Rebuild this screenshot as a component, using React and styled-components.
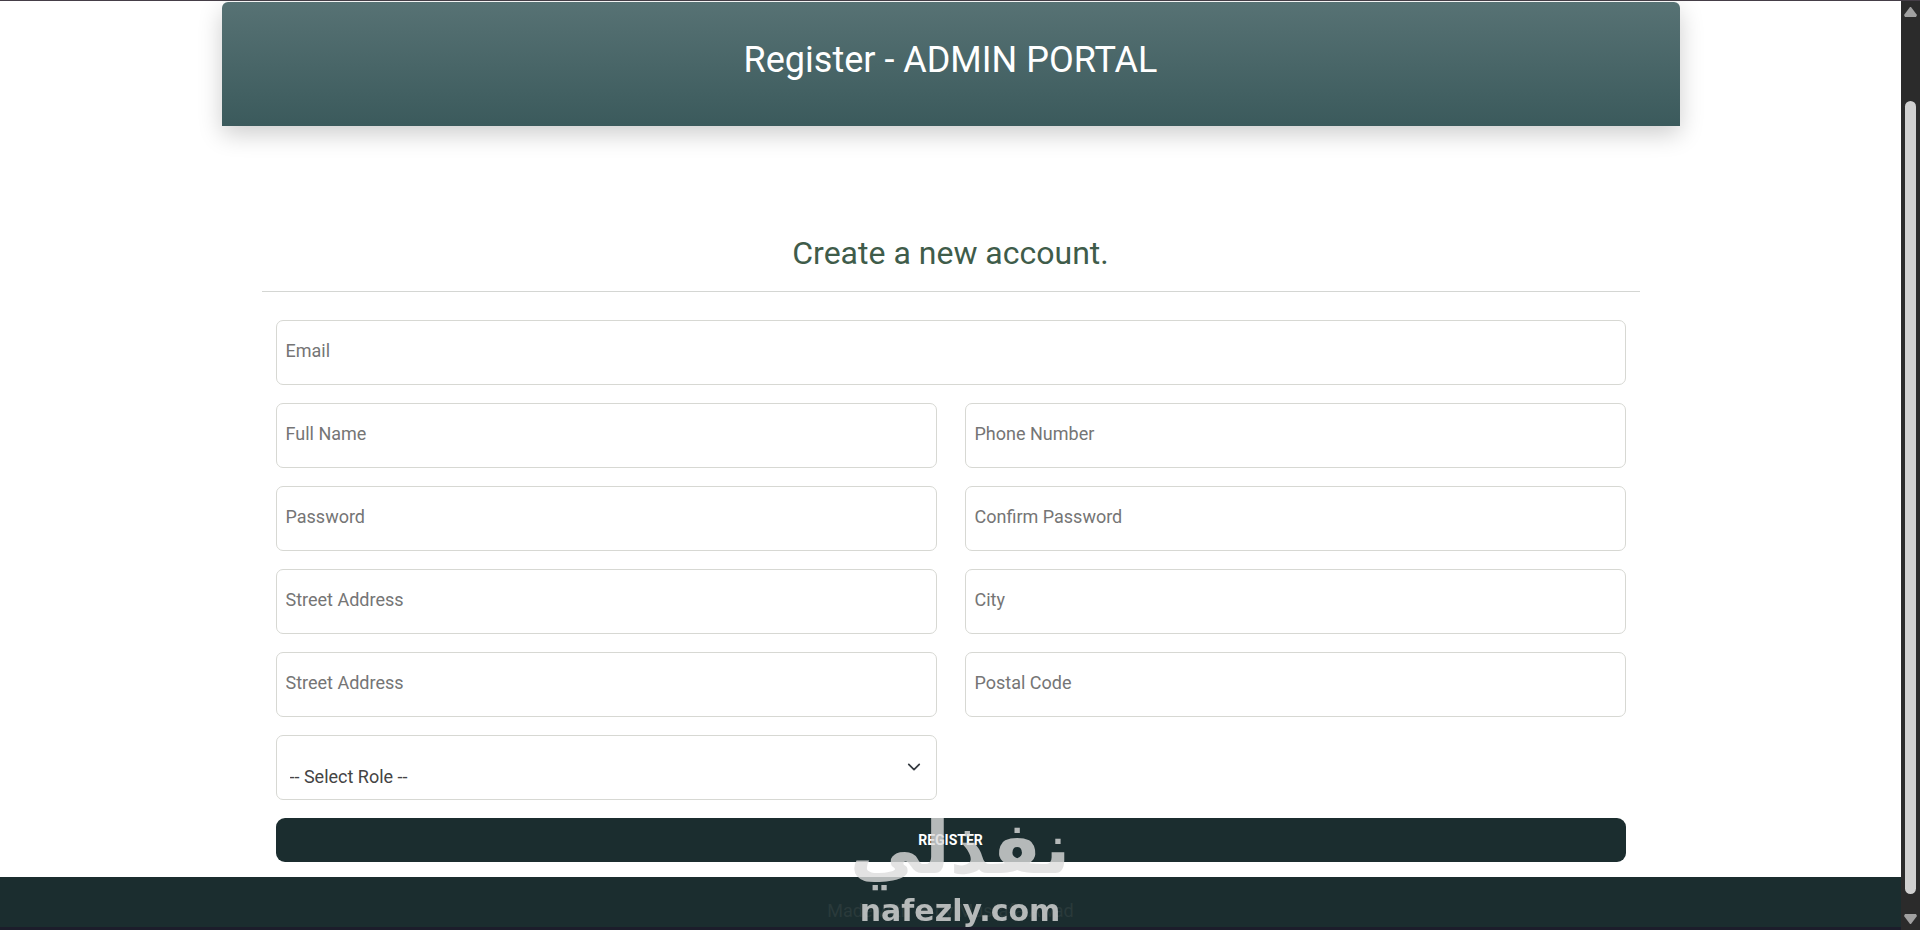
import styled, { createGlobalStyle } from 'styled-components';

const GlobalStyle = createGlobalStyle`
    * {
        box-sizing: border-box;
        margin: 0;
        padding: 0;
    }
    body {
        background-color: #fff;
        font-family: Roboto, 'Liberation Sans', sans-serif;
        font-size: 18px;
        color: #444;
    }
    html, body {
        overflow: hidden;
    }
`;
const Window = styled.div`
    display: flex;
    height: 100vh;
    overflow: hidden;
    border-top: 1px solid #453e47;
`;
const Page = styled.div`
    display: flex;
    flex-direction: column;
    flex-grow: 1;
    min-width: 0;
`;
const Main = styled.main`
    width: 77%;
    flex-grow: 1;
    max-width: 1458px;
    margin: 0 auto;
    padding-top: 1px;
`;
const Header = styled.header`
    height: 124px;
    padding-top: 32px;
    text-align: center;
    border-radius: 6px 6px 0 0;
    background: linear-gradient(#577274, #3b5a5c);
    box-shadow: 0 8px 24px #0003;
`;
const Title = styled.h1`
    font-size: 36px;
    font-weight: 400;
    line-height: 52px;
    color: #fff;
`;
const Form = styled.form`
    padding: 105px 40px 0;
`;
const Subtitle = styled.h2`
    font-size: 32px;
    font-weight: 400;
    line-height: 44px;
    text-align: center;
    color: #3f5c4a;
    padding-bottom: 16px;
    border-bottom: 1px solid #d4d6d3;
`;
const Fields = styled.div`
    display: grid;
    grid-template-columns: 1fr 1fr;
    gap: 18px 28px;
    padding: 28px 14px 14px;
`;
const Field = styled.label`
    display: grid;
    position: relative;
    grid-column: ${props=>props.$wide ? '1 / 3' : 'auto'};
`;
const Input = styled.input`
    width: 100%;
    height: 65px;
    padding: 0 9px 4px;
    border: 1px solid #d7d8d3;
    border-radius: 7px;
    background-color: #fff;
    font: inherit;
    &::placeholder {
        color: #757575;
        opacity: 1;
    }
`;
const Select = styled.select`
    appearance: none;
    width: 100%;
    height: 65px;
    padding: 18px 48px 0 13px;
    border: 1px solid #d7d8d3;
    border-radius: 7px;
    background-color: #fff;
    font: inherit;
    color: #444;
`;
const Arrow = styled.svg`
    position: absolute;
    top: 25px;
    right: 16px;
    width: 14px;
    height: 14px;
    pointer-events: none;
`;
const Button = styled.button`
    grid-column: 1 / 3;
    height: 44px;
    border: none;
    border-radius: 9px;
    background-color: #1b2d2f;
    font: inherit;
    font-size: 14px;
    font-weight: 700;
    text-transform: uppercase;
    color: #fff;
`;
const Footer = styled.footer`
    height: 53px;
    padding-top: 20px;
    text-align: center;
    line-height: 28px;
    background-color: #1b2d2f;
    border-bottom: 3px solid #1c1d2b;
    color: #2a3a3b;
`;
const ScrollBar = styled.div`
    display: flex;
    flex-direction: column;
    align-items: center;
    width: 19px;
    flex-shrink: 0;
    padding: 5px 0;
    background-color: #2b2b2b;
`;
const Track = styled.div`
    flex-grow: 1;
    width: 11px;
    padding: 84px 0 20px;
`;
const Thumb = styled.div`
    height: 100%;
    border-radius: 6px;
    background-color: #d0d0d0;
`;
const Caret = styled.svg`
    width: 13px;
    height: 11px;
    fill: #a0a0a0;
`;
const Watermark = styled.div`
    position: fixed;
    left: 50%;
    bottom: 0;
    transform: translateX(-50%);
    display: flex;
    flex-direction: column;
    align-items: center;
    gap: 8px;
    color: #dcdcdc;
    opacity: .8;
    pointer-events: none;
`;
const Arabic = styled.span`
    font-family: 'DejaVu Sans', sans-serif;
    font-size: 72px;
    font-weight: 700;
    line-height: 72px;
`;
const Domain = styled.span`
    font-family: 'DejaVu Sans', sans-serif;
    font-size: 30px;
    line-height: 38px;
    font-weight: 700;
`;

const fields = [
    { id: 'email', label: 'Email', type: 'email', wide: true },
    { id: 'name', label: 'Full Name' },
    { id: 'phone', label: 'Phone Number', type: 'tel' },
    { id: 'password', label: 'Password', type: 'password' },
    { id: 'confirm', label: 'Confirm Password', type: 'password' },
    { id: 'street', label: 'Street Address' },
    { id: 'city', label: 'City' },
    { id: 'state', label: 'Street Address' },
    { id: 'postal', label: 'Postal Code' },
];

const App = () => {
    return (
        <Window>
            <GlobalStyle/>
            <Page>
                <Main>
                    <Header>
                        <Title>Register - ADMIN PORTAL</Title>
                    </Header>
                    <Form onSubmit={e=>e.preventDefault()}>
                        <Subtitle>Create a new account.</Subtitle>
                        <Fields>
                            {fields.map(f=>(
                                <Field key={f.id} htmlFor={f.id} $wide={f.wide}>
                                    <Input id={f.id} type={f.type || 'text'} placeholder={f.label} aria-label={f.label}/>
                                </Field>
                            ))}
                            <Field htmlFor='role'>
                                <Select id='role' aria-label='Role'>
                                    <option>-- Select Role --</option>
                                </Select>
                                <Arrow viewBox='0 0 16 16' fill='none' stroke='#343a40' strokeWidth='2' strokeLinecap='round' strokeLinejoin='round'>
                                    <path d='m2 5 6 6 6-6'/>
                                </Arrow>
                            </Field>
                            <Button type='submit'>Register</Button>
                        </Fields>
                    </Form>
                </Main>
                <Footer>Made with ❤ by Mustafa Awad</Footer>
            </Page>
            <ScrollBar>
                <Caret viewBox='0 0 13 11'><path d='M6 1h1l6 8-1 2H1L0 9z'/></Caret>
                <Track><Thumb/></Track>
                <Caret viewBox='0 0 13 11'><path d='M6 10h1l6-8-1-2H1L0 2z'/></Caret>
            </ScrollBar>
            <Watermark>
                <Arabic lang='ar' dir='rtl'>نفذلي</Arabic>
                <Domain>nafezly.com</Domain>
            </Watermark>
        </Window>
    );
};

export default App;
